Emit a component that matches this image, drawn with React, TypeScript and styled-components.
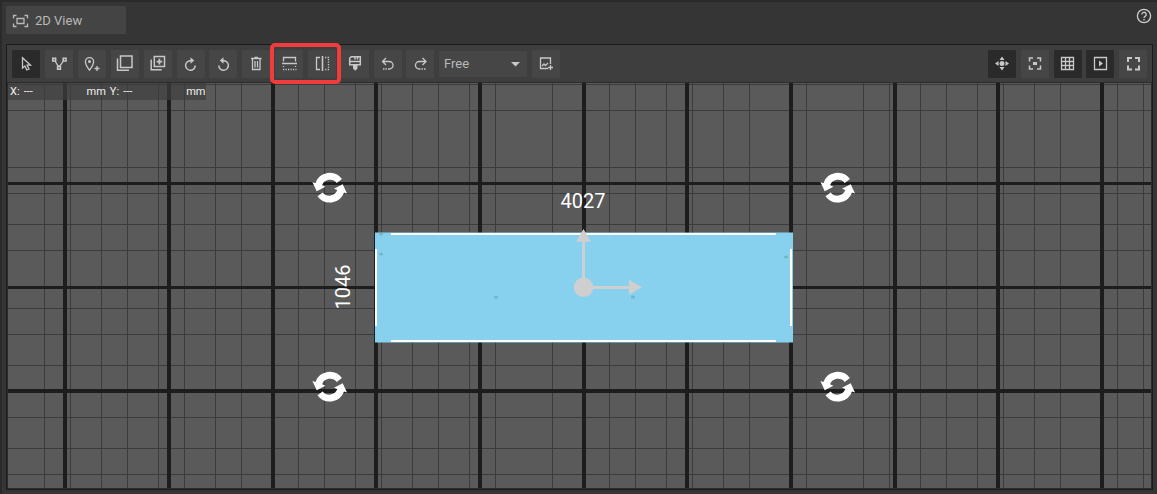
import React from 'react';
import styled, { createGlobalStyle } from 'styled-components';

const GlobalStyle = createGlobalStyle`
  * { box-sizing: border-box; }
  body {
    margin: 0;
    background: #353535;
    color: #c4c4c4;
    font-family: Roboto, "Liberation Sans", sans-serif;
  }
`;

const Page = styled.main`
  display: flex;
  flex-direction: column;
  min-height: 100vh;
  padding: 4px;
  border-top: 2px solid #2a2a2a;
  border-left: 2px solid #2a2a2a;
`;

const TitleRow = styled.header`
  display: flex;
  justify-content: space-between;
  align-items: flex-start;
  padding-right: 1px;
  margin-bottom: 10px;
`;

const Tab = styled.button`
  display: flex;
  align-items: center;
  gap: 6px;
  width: 120px;
  height: 28px;
  padding: 1px 6px 0;
  border: 0;
  border-radius: 1px;
  background: #444;
  color: #b9b9b9;
  font: 13px/16px Roboto, "Liberation Sans", sans-serif;
`;

const HelpButton = styled.button`
  display: flex;
  padding: 2px 0;
  border: 0;
  background: none;
  color: #cdcdcd;
`;

const Panel = styled.section`
  display: flex;
  flex: 1;
  flex-direction: column;
  border: 1px solid #1b1b1b;
`;

const Toolbar = styled.div`
  display: flex;
  justify-content: space-between;
  padding: 5px 5px 4px;
  background: #3e3e3e;
`;

const ToolSet = styled.div`
  display: flex;
  gap: 4px;
`;

const ToolGroup = styled.div`
  display: flex;
  align-items: center;
  gap: 5px;
`;

const HighlightedPair = styled(ToolGroup)`
  position: relative;

  &::after {
    content: '';
    position: absolute;
    z-index: 1;
    inset: -7px -5px -6px;
    border: 4px solid #f03c3c;
    border-radius: 5px;
    pointer-events: none;
  }
`;

const ToolButton = styled.button<{ $active?: boolean }>`
  display: flex;
  align-items: center;
  justify-content: center;
  width: 28px;
  height: 28px;
  padding: 0;
  border: 0;
  border-radius: 1px;
  background: ${(p) => (p.$active ? '#2a2a2a' : '#464646')};
  color: #c8c8c8;
`;

const SelectBox = styled.div`
  position: relative;
  display: flex;
  width: 88px;
  height: 26px;
`;

const ModeSelect = styled.select`
  width: 100%;
  padding: 0 5px;
  border: 0;
  border-radius: 1px;
  background: #464646;
  color: #b9b9b9;
  font: 13px/16px Roboto, "Liberation Sans", sans-serif;
  appearance: none;
`;

const SelectArrow = styled.svg`
  position: absolute;
  top: 11px;
  right: 7px;
  pointer-events: none;
`;

const Viewport = styled.div`
  position: relative;
  display: flex;
  flex: 1;
  min-height: 200px;
  border: 1px solid #2c2c2c;
  background: #5a5a5a;
`;

const Drawing = styled.svg`
  flex: 1;
  width: 0;
  min-width: 0;
`;

const Readout = styled.div`
  position: absolute;
  top: 0;
  left: 0;
  display: flex;
  height: 17px;
  padding: 0 1px 0 2px;
  gap: 4px;
  background: rgba(62, 62, 62, 0.7);
  color: #f0f0f0;
  font-size: 11px;
  line-height: 17px;
`;

const Coordinate = styled.label`
  display: flex;
  gap: 4px;
`;

const CoordinateInput = styled.input`
  width: 59px;
  padding: 0;
  border: 0;
  background: none;
  color: inherit;
  font: inherit;
`;

const DimensionText = styled.text`
  fill: #fff;
  font: 20px Roboto, "Liberation Sans", sans-serif;
  text-anchor: middle;
`;

const Glyph = ({ children }: { children: React.ReactNode }) => (
  <svg width="28" height="28" viewBox="0 0 28 28" fill="none" stroke="currentColor" strokeWidth="1.3">
    {children}
  </svg>
);

const TurnArrow = () => (
  <>
    <path d="M14 10.7A4.8 4.8 0 1 0 18.2 15.5" strokeWidth="1.5" />
    <path d="M13.500 7.200L17.200 10.500 13.500 13.800z" fill="currentColor" stroke="none" />
  </>
);

const icons = {
  select: <Glyph><path d="M10.5 7.8V18l2.4-2 1.9 4 2.2-1-1.9-3.8h3.4z" /></Glyph>,
  nodes: (
    <Glyph>
      <path d="M7.800 8.200h2.800v2.800h-2.800zM18.200 8.200h2.800v2.800h-2.800zM12.600 16.400h2.800v2.800h-2.800z" strokeWidth="1.600" />
      <path d="M10 11l3.400 5.400M18.400 11l-3.800 5.400" />
    </Glyph>
  ),
  pin: (
    <Glyph>
      <path d="M11.5 20.2C8.6 16.4 7.4 14 7.4 11.7a4.1 4.1 0 0 1 8.2 0c0 2.3-1.2 4.7-4.1 8.5z" />
      <circle cx="11.5" cy="11.5" r="1.5" fill="currentColor" stroke="none" />
      <path d="M19 16v5M16.5 18.5h5" />
    </Glyph>
  ),
  copy: <Glyph><path d="M9.500 6h11.500v11.500H9.500zM6.500 8.500v11.800H18" strokeWidth="1.500" /></Glyph>,
  duplicate: (
    <Glyph>
      <path d="M10.300 6.600h10.200v10H10.300zM7.200 9.500v10.300h10.500" strokeWidth="1.500" />
      <path d="M15.400 8.800v5.600M12.600 11.600h5.600" strokeWidth="1.800" />
    </Glyph>
  ),
  rotateRight: <Glyph><TurnArrow /></Glyph>,
  rotateLeft: <Glyph><g transform="matrix(-1 0 0 1 28 0)"><TurnArrow /></g></Glyph>,
  trash: (
    <Glyph>
      <path d="M9 8.500h10.500M12.500 7.500h3.500M10.500 8.500v11h7.500v-11M13 11v6.500M15.500 11v6.500" />
    </Glyph>
  ),
  mirrorVertical: (
    <Glyph>
      <path d="M8.500 11.500v-4h12v4M7 13.500h15" />
      <path d="M8 19.500h13.500" strokeDasharray="1.200 1.300" />
      <path d="M8.500 16v2M20.500 16v2" strokeDasharray="1 1" />
    </Glyph>
  ),
  mirrorHorizontal: (
    <Glyph>
      <path d="M12 7.500H8.500v12H12" />
      <path d="M14.500 6v15" strokeWidth="1.600" />
      <path d="M17 7.500h3.500v12H17" strokeDasharray="1.200 1.300" />
    </Glyph>
  ),
  brush: (
    <Glyph>
      <path d="M8.700 14.800V8.200l1.500-1.500h9.100v8.100zM8.700 11.500h10.600M14 6.700v2.800M16.500 6.700v2.800" strokeWidth="1.500" />
      <path d="M12 15h4.500v3.500l-2.200 2.300-2.300-2.300z" fill="currentColor" stroke="none" />
    </Glyph>
  ),
  undo: (
    <Glyph>
      <path d="M12 8l-3.500 3.500L12 15M8.500 11.500h6.800a3.700 3.700 0 0 1 0 7.500H14" />
      <path d="M9 19h4.500" strokeDasharray="1.500 1" />
    </Glyph>
  ),
  redo: (
    <Glyph>
      <path d="M16.500 8l3.500 3.500-3.500 3.500M20 11.500h-6.800a3.700 3.700 0 0 0 0 7.500h1.300" />
      <path d="M15.500 19H20" strokeDasharray="1.500 1" />
    </Glyph>
  ),
  image: (
    <Glyph>
      <path d="M18.500 14V8H8.500v10.500H16M10 16l2-2 1.500 1.500 2.500-2.500M18.500 15v5M16 17.500h5" />
    </Glyph>
  ),
  pan: (
    <Glyph>
      <g fill="currentColor" stroke="none">
        <circle cx="14" cy="13.500" r="2.500" />
        <path d="M7 13.500l3.500-2.500v5zM21 13.500L17.500 11v5zM14 6.500L11.500 10h5zM14 20.500L11.500 17h5z" />
      </g>
    </Glyph>
  ),
  focus: (
    <Glyph>
      <path d="M8.500 11.500V8H12M16 8h3.500v3.500M19.500 15.500V19H16M12 19H8.500v-3.500" strokeWidth="1.500" />
      <path d="M12 12h4v3h-4z" fill="currentColor" stroke="none" />
    </Glyph>
  ),
  grid: <Glyph><path d="M7.500 7.500h12v12h-12zM11.500 7.500v12M15.500 7.500v12M7.500 11.500h12M7.500 15.500h12" /></Glyph>,
  play: (
    <Glyph>
      <path d="M8.500 7.500h12v12h-12z" />
      <path d="M13 10.500v6l4-3z" fill="currentColor" stroke="none" />
    </Glyph>
  ),
  fullscreen: <Glyph><path d="M9 12V8h4M16 8h4v4M20 15.500v4h-4M13 19.500H9v-4" strokeWidth="2" /></Glyph>,
};

const minorX = [
  44, 70, 101, 127, 158, 184, 215, 241, 298, 324, 355, 381, 412, 438, 469, 495, 552, 609, 635, 666,
  692, 723, 749, 806, 863, 889, 920, 946, 977, 1003, 1034, 1060, 1117, 1143,
];
const minorY = [84, 110, 167, 193, 224, 250, 308, 334, 365, 417, 448, 474];
const majorX = [63, 167, 271, 374, 478, 582, 685, 789, 893, 996, 1100];
const majorY = [182, 286, 389];
const rotateHandles = [
  [329.7, 187.7],
  [837.7, 187.7],
  [329.7, 386.7],
  [837.7, 386.7],
];
const specks = [
  [381, 254],
  [496, 297],
  [786, 257],
  [381, 234],
  [633, 297],
];

const HalfTurn = () => (
  <path d="M12.200-8.600A15.100 15.100 0 0 0-14.300-4.700L-17.300-5.700-13 3.500-4.300-1-7.600-2.400A8.500 8.500 0 0 1 7-4.800z" />
);

const Plan = () => (
  <Drawing viewBox="8 83 1143 405" preserveAspectRatio="xMidYMid slice" role="img" aria-label="Floor plan">
    <g fill="#3b3b3b" shapeRendering="crispEdges">
      {minorX.map((x) => <rect key={x} x={x} y="83" width="1" height="405" />)}
      {minorY.map((y) => <rect key={y} x="8" y={y} width="1143" height="1" />)}
    </g>
    <g fill="#1d1d1d" shapeRendering="crispEdges">
      {majorX.map((x) => <rect key={x} x={x} y="83" width="4" height="405" />)}
      {majorY.map((y) => <rect key={y} x="8" y={y} width="1143" height={y === 389 ? 4 : 3} />)}
    </g>
    <rect x="375" y="232.500" width="418" height="110" fill="#87d1ee" />
    {specks.map(([x, y]) => (
      <ellipse key={`${x}-${y}`} cx={x} cy={y} rx="2" ry="1.500" fill="#4f8f8f" opacity="0.4" />
    ))}
    <g fill="#fff">
      <rect x="391" y="233" width="385" height="2" />
      <rect x="391" y="340" width="385" height="2" />
      <rect x="375" y="249" width="2" height="77" />
      <rect x="790" y="249" width="2" height="77" />
    </g>
    <g fill="#cfcfcf">
      <circle cx="583.600" cy="287.300" r="9.700" />
      <path d="M582 240h3v47h-3zM583.500 229l7.500 12.700h-15z" />
      <path d="M584 286h46v3h-46zM642 287.300l-13 7.500v-15z" />
    </g>
    <DimensionText x="583" y="208">4027</DimensionText>
    <DimensionText transform="translate(350 287) rotate(-90)">1046</DimensionText>
    {rotateHandles.map(([x, y]) => (
      <g key={`${x}-${y}`} transform={`translate(${x} ${y})`} fill="#fff">
        <HalfTurn />
        <g transform="rotate(180)"><HalfTurn /></g>
      </g>
    ))}
  </Drawing>
);

interface ToolProps {
  label: string;
  icon: React.ReactNode;
  active?: boolean;
}

const Tool = ({ label, icon, active }: ToolProps) => (
  <ToolButton type="button" aria-label={label} $active={active}>{icon}</ToolButton>
);

export default function App() {
  return (
    <>
      <GlobalStyle />
      <Page>
        <TitleRow>
          <Tab type="button">
            <svg width="17" height="14" viewBox="0 0 17 14" fill="none" stroke="currentColor" strokeWidth="1.300">
              <path d="M4.500 1.500h-3v3M12.500 1.500h3v3M15.500 9.500v3h-3M4.500 12.500h-3v-3M5 4.500h7v5H5z" />
            </svg>
            2D View
          </Tab>
          <HelpButton type="button" aria-label="Help">
            <svg width="16" height="16" viewBox="0 0 16 16" fill="none" stroke="currentColor" strokeWidth="1.300">
              <circle cx="8" cy="8" r="6.600" />
              <path d="M5.800 6.500a2.200 2.200 0 1 1 3.300 1.900C8.300 8.900 8 9.200 8 10M8 11v1.400" />
            </svg>
          </HelpButton>
        </TitleRow>
        <Panel>
          <Toolbar>
            <ToolSet>
              <ToolGroup>
                <Tool label="Select" icon={icons.select} active />
                <Tool label="Edit nodes" icon={icons.nodes} />
                <Tool label="Add pin" icon={icons.pin} />
                <Tool label="Copy" icon={icons.copy} />
                <Tool label="Duplicate" icon={icons.duplicate} />
                <Tool label="Rotate right" icon={icons.rotateRight} />
              </ToolGroup>
              <ToolGroup>
                <Tool label="Rotate left" icon={icons.rotateLeft} />
                <Tool label="Delete" icon={icons.trash} />
                <HighlightedPair>
                  <Tool label="Mirror vertically" icon={icons.mirrorVertical} />
                  <Tool label="Mirror horizontally" icon={icons.mirrorHorizontal} />
                </HighlightedPair>
                <Tool label="Paint" icon={icons.brush} />
                <Tool label="Undo" icon={icons.undo} />
              </ToolGroup>
              <ToolGroup>
                <Tool label="Redo" icon={icons.redo} />
                <SelectBox>
                  <ModeSelect aria-label="Mode" defaultValue="Free">
                    <option>Free</option>
                  </ModeSelect>
                  <SelectArrow width="9" height="5" viewBox="0 0 9 5" fill="#c8c8c8">
                    <path d="M0 0h9L4.500 4.500z" />
                  </SelectArrow>
                </SelectBox>
                <Tool label="Add image" icon={icons.image} />
              </ToolGroup>
            </ToolSet>
            <ToolSet>
              <ToolGroup>
                <Tool label="Pan" icon={icons.pan} active />
                <Tool label="Focus" icon={icons.focus} />
                <Tool label="Grid" icon={icons.grid} active />
              </ToolGroup>
              <ToolGroup>
                <Tool label="Preview" icon={icons.play} active />
                <Tool label="Full screen" icon={icons.fullscreen} />
              </ToolGroup>
            </ToolSet>
          </Toolbar>
          <Viewport>
            <Plan />
            <Readout>
              <Coordinate>
                X:
                <CoordinateInput defaultValue="---" />
                mm
              </Coordinate>
              <Coordinate>
                Y:
                <CoordinateInput defaultValue="---" />
                mm
              </Coordinate>
            </Readout>
          </Viewport>
        </Panel>
      </Page>
    </>
  );
}
